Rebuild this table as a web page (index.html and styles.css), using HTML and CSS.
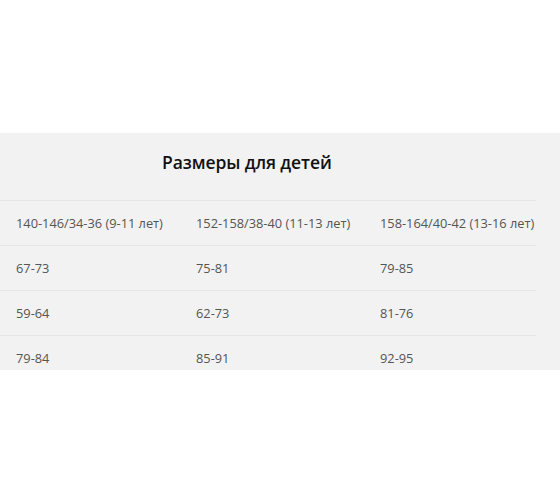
FILE: index.html
```html
<!DOCTYPE html>
<html lang="ru">
<head>
<meta charset="utf-8">
<link rel="stylesheet" href="styles.css">
</head>
<body>
<section class="panel">
  <h2 class="title">Размеры для детей</h2>
  <table class="sizes">
    <tr><td>140-146/34-36 (9-11 лет)</td><td>152-158/38-40 (11-13 лет)</td><td>158-164/40-42 (13-16 лет)</td></tr>
    <tr><td>67-73</td><td>75-81</td><td>79-85</td></tr>
    <tr><td>59-64</td><td>62-73</td><td>81-76</td></tr>
    <tr><td>79-84</td><td>85-91</td><td>92-95</td></tr>
  </table>
</section>
</body>
</html>
```
FILE: styles.css
```css
html, body {
  margin: 0;
  padding: 0;
  background: #ffffff;
}
body {
  font-family: "Open Sans", "Liberation Sans", sans-serif;
}
.panel {
  margin-top: 133px;
  height: 237px;
  overflow: hidden;
  background: #f2f2f2;
}
.title {
  margin: 0;
  height: 67px;
  box-sizing: border-box;
  padding: 17px 0 0 162px;
  font-size: 17.5px;
  font-weight: 600;
  color: #111111;
  line-height: 24px;
  letter-spacing: -0.1px;
}
.sizes {
  width: 536px;
  border-collapse: collapse;
  border-top: 1px solid #e6e6e6;
}
.sizes td {
  height: 44px;
  padding: 0 0 0 16px;
  font-size: 12.8px;
  color: #555555;
  border-bottom: 1px solid #e6e6e6;
  white-space: nowrap;
}
.sizes td:nth-child(1) { width: 164px; }
.sizes td:nth-child(2) { width: 168px; }
```
